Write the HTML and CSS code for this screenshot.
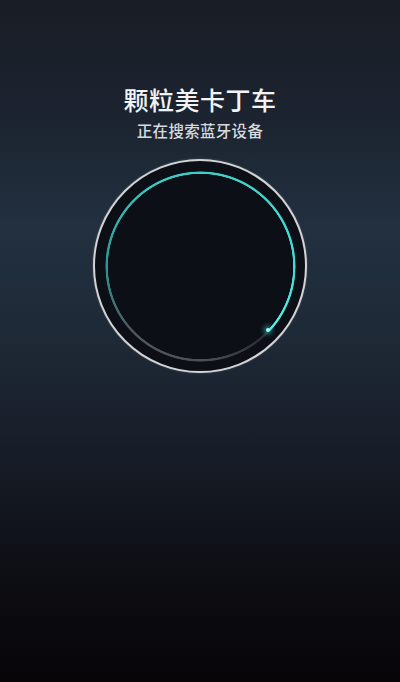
FILE: index.html
```html
<!DOCTYPE html>
<html lang="zh">
<head>
<meta charset="utf-8">
<link rel="stylesheet" href="styles.css">
</head>
<body>
<main class="screen">
  <h1 class="title">颗粒美卡丁车</h1>
  <p class="subtitle">正在搜索蓝牙设备</p>
  <div class="disk">
    <div class="arc"></div>
    <span class="glow"></span>
  </div>
</main>
</body>
</html>
```
FILE: styles.css
```css
html, body {
  margin: 0;
  padding: 0;
}
body {
  width: 400px;
  height: 682px;
  overflow: hidden;
  font-family: "Noto Sans CJK SC", "Noto Sans", sans-serif;
}
.screen {
  height: 682px;
  display: flex;
  flex-direction: column;
  align-items: center;
  padding-top: 84px;
  box-sizing: border-box;
  background: linear-gradient(to bottom,
    #191d25 0%,
    #1c2431 18%,
    #22303f 33%,
    #1f2a38 48%,
    #171d28 66%,
    #0e1016 82%,
    #070407 100%);
}
.title {
  margin: 0;
  font-size: 25px;
  line-height: 30px;
  font-weight: 500;
  color: #f2f3f5;
  letter-spacing: 0.5px;
}
.subtitle {
  margin: 6px 0 0;
  font-size: 15.5px;
  line-height: 20px;
  font-weight: 500;
  color: #d6dade;
  letter-spacing: 0.3px;
}
.disk {
  position: relative;
  margin-top: 19px;
  width: 214px;
  height: 214px;
  box-sizing: border-box;
  border-radius: 50%;
  border: 2px solid #d2d3d5;
  background: #0c0f16;
  box-shadow: 0 0 2px rgba(255,255,255,0.25);
  display: flex;
  align-items: center;
  justify-content: center;
}
.arc {
  width: 191px;
  height: 191px;
  border-radius: 50%;
  background: conic-gradient(from 133deg,
    #24282e 0deg,
    #4d5055 45deg,
    #4f585a 95deg,
    #2c9a97 140deg,
    #3acbc4 200deg,
    #42dcd4 320deg,
    #58f0e8 360deg);
  -webkit-mask: radial-gradient(closest-side, transparent calc(100% - 3.2px), #000 calc(100% - 2.6px), #000 99%, transparent 100%);
  mask: radial-gradient(closest-side, transparent calc(100% - 3.2px), #000 calc(100% - 2.6px), #000 99%, transparent 100%);
}
.glow {
  position: absolute;
  left: 171px;
  top: 167px;
  width: 4px;
  height: 4px;
  border-radius: 50%;
  background: #9ffcf5;
  box-shadow: 0 0 5px 2px rgba(60, 230, 220, 0.55);
}
```
